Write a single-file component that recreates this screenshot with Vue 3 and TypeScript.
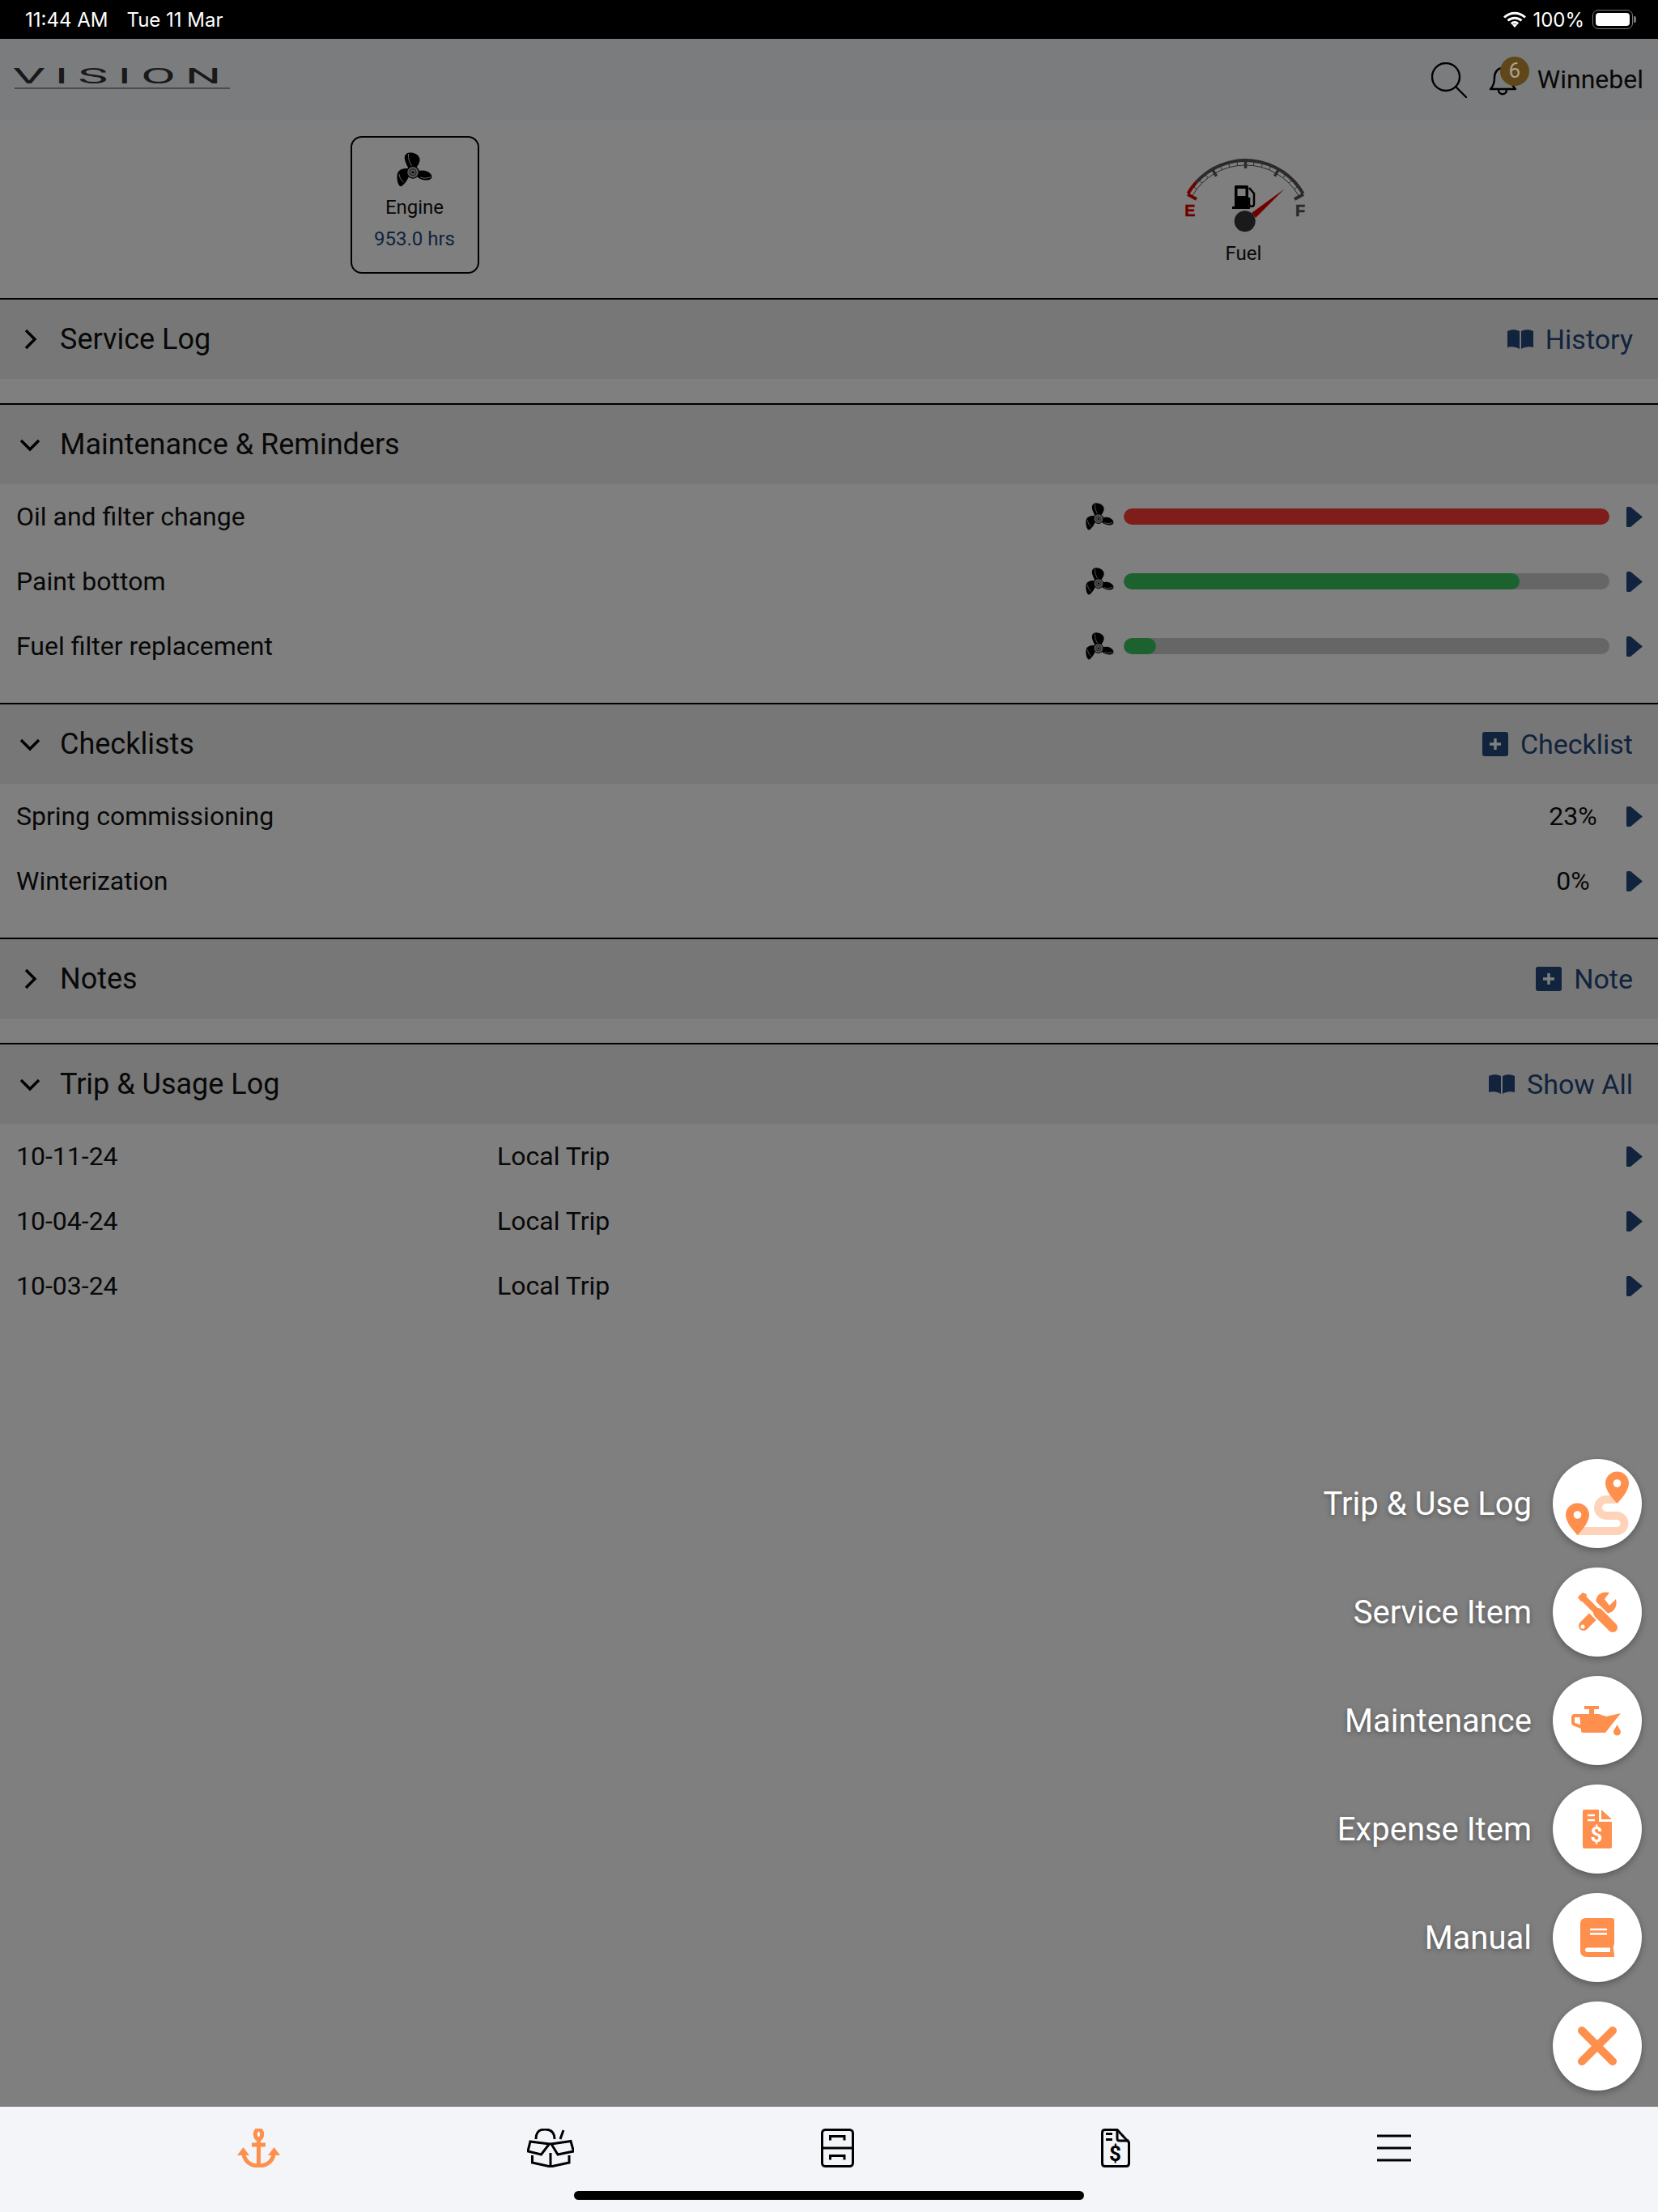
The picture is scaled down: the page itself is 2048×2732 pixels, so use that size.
<script setup lang="ts">
import { computed } from 'vue'

interface Reminder { name: string; pct: number; color: string }

const reminders: Reminder[] = [
  { name: 'Oil and filter change', pct: 100, color: '#fc3a32' },
  { name: 'Paint bottom', pct: 81.5, color: '#38c45c' },
  { name: 'Fuel filter replacement', pct: 6.7, color: '#38c45c' }
]
const checklists = [
  { name: 'Spring commissioning', pct: '23%' },
  { name: 'Winterization', pct: '0%' }
]
const trips = [
  { date: '10-11-24', kind: 'Local Trip' },
  { date: '10-04-24', kind: 'Local Trip' },
  { date: '10-03-24', kind: 'Local Trip' }
]
const actions = [
  { label: 'Trip & Use Log', icon: 'route' },
  { label: 'Service Item', icon: 'tools' },
  { label: 'Maintenance', icon: 'oil' },
  { label: 'Expense Item', icon: 'expense' },
  { label: 'Manual', icon: 'manual' }
]

// gauge geometry, measured from the reference
const cx = 118.5
const cy = 110
const polar = (deg: number, r: number) => {
  const a = (deg * Math.PI) / 180
  return { x: +(cx + r * Math.sin(a)).toFixed(2), y: +(cy - r * Math.cos(a)).toFixed(2) }
}
const arc = (from: number, to: number, r: number) => {
  const a = polar(from, r)
  const b = polar(to, r)
  return `M${a.x} ${a.y}A${r} ${r} 0 0 1 ${b.x} ${b.y}`
}
const fineTicks = computed(() => {
  const out: string[] = []
  for (let d = -60; d <= 60; d += 7.5) {
    const a = polar(d, 76)
    const b = polar(d, 81)
    out.push(`M${a.x} ${a.y}L${b.x} ${b.y}`)
  }
  return out.join('')
})
const majorTicks = computed(() =>
  [-30, 0, 30]
    .map((d) => {
      const a = polar(d, 72)
      const b = polar(d, 82)
      return `M${a.x} ${a.y}L${b.x} ${b.y}`
    })
    .join('')
)
</script>

<template>
  <div class="screen">
    <svg class="defs" width="0" height="0" aria-hidden="true">
      <symbol id="prop" viewBox="0 0 44 44">
        <path d="M15 21C12 15 9 9 10 5C11 1 15 0 18 .5C24 1 29 5 28.500 10C28 14 26 17 23 20Z" fill="#000" />
        <path d="M27 23C31 22 36 22 40 25C43 27 44 30 43 32C41 35 36 35 32 34C29 33 27 32 25 30Z" fill="#000" />
        <path d="M14 20C10 20 6 20 3 23C0 26 0 31 1 36C2 40 4 43 6 42C9 40 13 35 15 30Z" fill="#000" />
        <path d="M14.500 2C14 8 16 13 18.500 17M29 31C33 32.500 38 32.500 42 30.500M3 27C3.500 31 5.500 35 8.500 37" fill="none" stroke="#ccc" stroke-width="1" />
        <circle cx="20" cy="24.700" r="7.400" fill="#aaa" stroke="#000" stroke-width="1.200" />
        <circle cx="20" cy="24.700" r="4" fill="none" stroke="#333" stroke-width="1" />
        <circle cx="20" cy="24.700" r="1.500" fill="#000" />
      </symbol>
      <symbol id="arrow" viewBox="0 0 20 25">
        <path d="M0 1.500Q0 0 1.500 0H5L20 12.500 5 25H1.500Q0 25 0 23.500Z" fill="#22467a" />
      </symbol>
      <symbol id="open-book" viewBox="0 0 32 24">
        <path d="M0 2C5 -.5 10 -.5 15 2V24C10 21 5 20.500 0 22ZM32 2C27 -.5 22 -.5 17 2V24C22 21 27 20.500 32 22Z" fill="#22467a" />
      </symbol>
      <symbol id="plus-box" viewBox="0 0 32 30">
        <rect width="32" height="30" rx="3" fill="#22467a" />
        <path d="M16 8V22M9 15H23" stroke="#fff" stroke-width="3.400" />
      </symbol>
    </svg>

    <div class="status">
      <div class="status-left"><span>11:44 AM</span><span>Tue 11 Mar</span></div>
      <div class="status-right">
        <svg width="28" height="20" viewBox="0 0 28 20">
          <path d="M1 7.500C8.500 .5 19.500 .5 27 7.500M5.500 11.500C10.500 7 17.500 7 22.500 11.500M9.800 15.300C12.400 13 15.600 13 18.200 15.300" fill="none" stroke="#fff" stroke-width="3" />
          <path d="M14 20L10.800 16.500C12.800 15 15.200 15 17.200 16.500Z" fill="#fff" />
        </svg>
        <span>100%</span>
        <div class="battery"><div class="battery-fill"></div></div>
      </div>
    </div>

    <div class="main">
      <header class="topbar">
        <div class="logo">
          <span class="logo-text">VISION</span>
          <div class="logo-rule"></div>
        </div>
        <div class="topbar-right">
          <svg class="search" width="44" height="44" viewBox="0 0 44 44">
            <circle cx="18" cy="18" r="17" fill="none" stroke="#000" stroke-width="2.400" />
            <path d="M30 30L43 43" stroke="#000" stroke-width="2.400" stroke-linecap="round" />
          </svg>
          <div class="bell">
            <svg width="36" height="38" viewBox="0 0 36 38">
              <path d="M2 28C6 24 7 20 7 14 7 7 11 2 17 2 23 2 27 7 27 14 27 20 29 24 33 28Z" fill="none" stroke="#000" stroke-width="2.400" stroke-linejoin="round" />
              <path d="M12 29C12 36 22 36 22 29" fill="none" stroke="#000" stroke-width="2.400" />
            </svg>
            <span class="badge">6</span>
          </div>
          <span class="user">Winnebel</span>
        </div>
      </header>

      <div class="summary">
        <div class="summary-cell">
          <div class="engine">
            <svg width="44" height="44"><use href="#prop" /></svg>
            <span class="engine-label">Engine</span>
            <span class="engine-hours">953.0 hrs</span>
          </div>
        </div>
        <div class="summary-cell">
          <div class="fuel">
            <svg width="240" height="125" viewBox="0 0 240 125">
              <path :d="arc(-48, 60, 82)" fill="none" stroke="#555" stroke-width="4" />
              <path :d="fineTicks" fill="none" stroke="#555" stroke-width="1" />
              <path :d="arc(-60, 60, 76)" fill="none" stroke="#555" stroke-width="1" />
              <path :d="majorTicks" fill="none" stroke="#555" stroke-width="3.500" />
              <path :d="arc(-60, -48, 82)" fill="none" stroke="#e00000" stroke-width="4" />
              <path d="M47 70L58 76" stroke="#e00000" stroke-width="4" />
              <path d="M190 70L179 76" stroke="#555" stroke-width="4" />
              <text x="50" y="97" class="gauge-e">E</text>
              <text x="186" y="97" class="gauge-f">F</text>
              <path d="M105 60Q105 59 107 59H120Q122 59 122 61V85H124V88H102V85H105ZM108.500 63V72H118.500V63Z" fill="#000" />
              <path d="M123 62L129 69V82C129 86 123 86 123 82V74" fill="none" stroke="#000" stroke-width="2.500" />
              <path d="M166.700 63.300L126 93 131 99Z" fill="#e00000" />
              <circle cx="117.700" cy="103.300" r="13" fill="#343434" />
            </svg>
            <span class="fuel-label">Fuel</span>
          </div>
        </div>
      </div>

      <section class="section">
        <div class="section-head">
          <svg class="chev" width="50" height="50" viewBox="0 0 50 50"><path d="M20 14L31 25 20 36" /></svg>
          <span class="section-title">Service Log</span>
          <span class="section-action">
            <svg width="32" height="24"><use href="#open-book" /></svg>History
          </span>
        </div>
      </section>

      <section class="section">
        <div class="section-head">
          <svg class="chev" width="50" height="50" viewBox="0 0 50 50"><path d="M14 20L25 31 36 20" /></svg>
          <span class="section-title">Maintenance &amp; Reminders</span>
        </div>
        <div v-for="r in reminders" :key="r.name" class="row">
          <span class="row-name">{{ r.name }}</span>
          <svg class="row-prop" width="35" height="35"><use href="#prop" /></svg>
          <div class="track">
            <div class="track-fill" :style="{ width: r.pct + '%', background: r.color }"></div>
          </div>
          <svg class="row-arrow" width="20" height="25"><use href="#arrow" /></svg>
        </div>
      </section>

      <section class="section">
        <div class="section-head">
          <svg class="chev" width="50" height="50" viewBox="0 0 50 50"><path d="M14 20L25 31 36 20" /></svg>
          <span class="section-title">Checklists</span>
          <span class="section-action">
            <svg width="32" height="30"><use href="#plus-box" /></svg>Checklist
          </span>
        </div>
        <div v-for="c in checklists" :key="c.name" class="row">
          <span class="row-name">{{ c.name }}</span>
          <span class="row-pct">{{ c.pct }}</span>
          <svg class="row-arrow" width="20" height="25"><use href="#arrow" /></svg>
        </div>
      </section>

      <section class="section">
        <div class="section-head">
          <svg class="chev" width="50" height="50" viewBox="0 0 50 50"><path d="M20 14L31 25 20 36" /></svg>
          <span class="section-title">Notes</span>
          <span class="section-action">
            <svg width="32" height="30"><use href="#plus-box" /></svg>Note
          </span>
        </div>
      </section>

      <section class="section">
        <div class="section-head">
          <svg class="chev" width="50" height="50" viewBox="0 0 50 50"><path d="M14 20L25 31 36 20" /></svg>
          <span class="section-title">Trip &amp; Usage Log</span>
          <span class="section-action">
            <svg width="32" height="24"><use href="#open-book" /></svg>Show All
          </span>
        </div>
        <div v-for="t in trips" :key="t.date" class="row">
          <span class="row-date">{{ t.date }}</span>
          <span class="row-name">{{ t.kind }}</span>
          <svg class="row-arrow" width="20" height="25"><use href="#arrow" /></svg>
        </div>
      </section>

      <div class="fab-menu">
        <div v-for="a in actions" :key="a.label" class="fab-item">
          <span class="fab-label">{{ a.label }}</span>
          <div class="fab">
            <svg width="110" height="110" viewBox="0 0 110 110">
              <template v-if="a.icon === 'route'">
                <path d="M78 50H66A10 10 0 0 0 66 70H79A9.500 9.500 0 0 1 79 89H30" fill="none" stroke="#ffd3b9" stroke-width="10" />
                <path d="M79.500 55C74 49 65 39 65 30A14.500 14.500 0 0 1 94 30C94 39 85 49 79.500 55Z" fill="#fe8f4c" />
                <circle cx="79.500" cy="30" r="4.800" fill="#fff" />
                <path d="M30.500 94C25 88 16 78 16 69A14.500 14.500 0 0 1 45 69C45 78 36 88 30.500 94Z" fill="#fe8f4c" />
                <circle cx="30.500" cy="69" r="4.800" fill="#fff" />
              </template>
              <template v-else-if="a.icon === 'tools'">
                <path d="M38 72L62 48" stroke="#fe8f4c" stroke-width="12" stroke-linecap="round" />
                <circle cx="37" cy="73" r="2.600" fill="#fff" />
                <path d="M54 38C56 32 63 29 70 31L64 39 70 47 78 39C80 46 77 54 70 56 66 57 62 56 60 55L54 49C53 45 53 41 54 38Z" fill="#fe8f4c" />
                <path d="M34 34L74 74" stroke="#fff" stroke-width="16" />
                <path d="M34 34L56 56" stroke="#fe8f4c" stroke-width="8" />
                <path d="M31 37L37 31 42 33 41 40 35 42Z" fill="#fe8f4c" />
                <path d="M56 56L74 74" stroke="#fe8f4c" stroke-width="12" stroke-linecap="round" />
              </template>
              <template v-else-if="a.icon === 'oil'">
                <path d="M39 37H57V41H51V47H45V41H39Z" fill="#fe8f4c" />
                <path d="M33 47H57L66 50 84 46 65 70H37Q35 70 35 68Z" fill="#fe8f4c" />
                <path d="M36 49H27Q25 49 25 51V57Q25 59 27 60L36 63" fill="none" stroke="#fe8f4c" stroke-width="4" />
                <path d="M79.500 60C77 65 75 67 75 69A4.500 4.500 0 0 0 84 69C84 67 82 65 79.500 60Z" fill="#fe8f4c" />
              </template>
              <template v-else-if="a.icon === 'expense'">
                <path d="M39 31H57V46H73V77Q73 79 71 79H39Q37 79 37 77V33Q37 31 39 31Z" fill="#fe8f4c" />
                <path d="M60 31L73 43H60Z" fill="#fe8f4c" />
                <path d="M43 38H52M43 44H52" stroke="#fff" stroke-width="2.500" />
                <text x="54" y="71" class="fab-dollar">$</text>
              </template>
              <template v-else>
                <path d="M41 31H73Q76 31 76 34V63Q74 66 75 70 76 73 76 79H42Q34 79 34 71V38Q34 31 41 31Z" fill="#fe8f4c" />
                <path d="M46 45H67M46 50.500H67" stroke="#fff" stroke-width="2.500" />
                <path d="M43 67.500H71V73H43Q40 73 40 70.200 40 67.500 43 67.500Z" fill="#fff" />
              </template>
            </svg>
          </div>
        </div>
        <div class="fab-item">
          <div class="fab">
            <svg width="110" height="110" viewBox="0 0 110 110">
              <path d="M36 36L74 74M74 36L36 74" stroke="#fe8f4c" stroke-width="10" stroke-linecap="round" />
            </svg>
          </div>
        </div>
      </div>
    </div>

    <nav class="tabbar">
      <svg width="53" height="48" viewBox="0 0 53 48" class="orange">
        <ellipse cx="26.500" cy="7" rx="4.200" ry="6" />
        <path d="M26.500 13V47M18 20H35M7.500 27C7.500 39 15 46 26.500 46 38 46 45.500 39 45.500 27" />
        <path d="M0 33L7.500 23 15 33ZM38 33L45.500 23 53 33Z" class="solid" />
      </svg>
      <svg width="58" height="48" viewBox="0 0 58 48">
        <path d="M11 13C11 4 15 1 22 1 30 1 34 5 34 13M45 2L41 13" />
        <path d="M4 16L27.500 19 17.500 32 1 28ZM54 15.500L30 19 38 32 57.500 28Z" />
        <path d="M6.500 33V42L29 47 52 42V33M29 30V47" />
      </svg>
      <svg width="41" height="48" viewBox="0 0 41 48">
        <rect x="1.500" y="1.500" width="38" height="45" rx="4" />
        <path d="M1.500 24H39.500M11.500 14.500V9.500H29V14.500M11.500 38.500V33.500H29V38.500" />
      </svg>
      <svg width="36" height="48" viewBox="0 0 36 48">
        <path d="M5 1.500H20L34.500 17V43Q34.500 46.500 31 46.500H5Q1.500 46.500 1.500 43V5Q1.500 1.500 5 1.500Z" />
        <path d="M20 1.500V12Q20 15 23 15H34.500M6 6.500H14M6 13.500H14" />
        <text x="17.500" y="40" class="nav-dollar">$</text>
      </svg>
      <svg width="42" height="36" viewBox="0 0 42 36" class="burger">
        <path d="M0 3H42M0 18H42M0 33H42" />
      </svg>
    </nav>
    <div class="home-bar"></div>
  </div>
</template>

<style scoped>
.screen {
  position: relative;
  display: flex;
  flex-direction: column;
  width: 2048px;
  height: 2732px;
  overflow: hidden;
  font-family: Roboto, "Liberation Sans", sans-serif;
  color: #111;
}

.defs {
  position: absolute;
}

.status {
  display: flex;
  justify-content: space-between;
  align-items: center;
  height: 48px;
  padding: 0 31px;
  background: #000;
  color: #fff;
  font-family: Inter, Roboto, sans-serif;
  font-size: 24px;
}

.status-left {
  display: flex;
  gap: 23px;
}

.status-right {
  display: flex;
  align-items: center;
  gap: 8px;
}

.battery {
  position: relative;
  width: 50px;
  height: 24px;
  padding: 3px;
  margin-left: 2px;
  border: 1.500px solid #777;
  border-radius: 7px;
  box-sizing: border-box;
}

.battery::after {
  content: "";
  position: absolute;
  right: -5px;
  top: 7px;
  width: 3px;
  height: 8px;
  border-radius: 0 2px 2px 0;
  background: #777;
}

.battery-fill {
  height: 100%;
  border-radius: 4px;
  background: #fff;
}

.main {
  position: relative;
  flex: 1;
  background: #fff;
}

.main::after {
  content: "";
  position: absolute;
  inset: 0;
  z-index: 1;
  background: rgba(0, 0, 0, 0.5);
}

.topbar {
  display: flex;
  justify-content: space-between;
  height: 100px;
  background: #f7f9fc;
}

.logo {
  padding: 34px 0 0 16px;
}

.logo-text {
  display: block;
  width: 252px;
  height: 26px;
  font-size: 25px;
  font-weight: 400;
  line-height: 26px;
  letter-spacing: 4.700px;
  white-space: nowrap;
  color: #333;
  transform: scaleX(2.500);
  transform-origin: left center;
}

.logo-rule {
  width: 266px;
  height: 2px;
  margin: 0 0 0 2px;
  background: #999;
}

.topbar-right {
  display: flex;
  align-items: flex-start;
  padding-right: 18px;
}

.search {
  margin: 29px 0 0 0;
}

.bell {
  position: relative;
  width: 36px;
  height: 38px;
  margin: 34px 24px 0 27px;
}

.badge {
  position: absolute;
  left: 14px;
  top: -12px;
  z-index: 2;
  width: 36px;
  height: 36px;
  border-radius: 50%;
  background: #5f471a;
  color: #aca28e;
  font-size: 26px;
  line-height: 34px;
  text-align: center;
}

.user {
  margin-top: 29px;
  font-size: 32px;
  line-height: 42px;
}

.summary {
  display: flex;
  height: 220px;
}

.summary-cell {
  display: flex;
  flex: 1;
  justify-content: center;
}

.engine {
  display: flex;
  flex-direction: column;
  align-items: center;
  box-sizing: border-box;
  width: 159px;
  height: 170px;
  margin-top: 20px;
  padding-top: 18px;
  border: 2px solid #000;
  border-radius: 14px;
}

.engine-label {
  margin-top: 8px;
  font-size: 24px;
  line-height: 32px;
}

.engine-hours {
  margin-top: 7px;
  font-size: 24px;
  line-height: 32px;
  color: #22467a;
}

.fuel {
  display: flex;
  flex-direction: column;
  align-items: center;
  margin: 22px 0 0 8px;
}

.fuel-label {
  margin-top: 2px;
  margin-right: 8px;
  font-size: 24px;
  line-height: 32px;
}

.gauge-e,
.gauge-f {
  font-family: "Liberation Sans", sans-serif;
  font-size: 20px;
  font-weight: 700;
  stroke-width: 0.500;
  text-anchor: middle;
}

.gauge-e {
  fill: #e00000;
  stroke: #e00000;
}

.gauge-f {
  fill: #555;
  stroke: #555;
}

.section {
  border-top: 2px solid #000;
  padding-bottom: 30px;
}

.section-head {
  display: flex;
  align-items: center;
  height: 98px;
  padding: 0 31px 0 12px;
  background: #eee;
}

.chev {
  margin-right: 12px;
  fill: none;
  stroke: #000;
  stroke-width: 3.400;
}

.section-title {
  flex: 1;
  font-size: 36px;
}

.section-action {
  display: flex;
  align-items: center;
  gap: 15px;
  font-size: 34px;
  color: #22467a;
}

.row {
  display: flex;
  align-items: center;
  height: 80px;
  padding: 0 19px 0 20px;
  font-size: 32px;
}

.row-name {
  flex: 1;
}

.row-date {
  width: 594px;
}

.row-prop {
  margin-right: 12px;
}

.track {
  width: 600px;
  height: 20px;
  margin-right: 21px;
  border-radius: 10px;
  background: #ccc;
  overflow: hidden;
}

.track-fill {
  height: 100%;
  border-radius: 10px;
}

.row-pct {
  width: 60px;
  margin-right: 36px;
  text-align: center;
}

.fab-menu {
  position: absolute;
  right: 20px;
  bottom: 20px;
  z-index: 2;
  display: flex;
  flex-direction: column;
  gap: 24px;
}

.fab-item {
  display: flex;
  align-items: center;
  justify-content: flex-end;
  gap: 26px;
}

.fab-label {
  font-size: 40px;
  color: #fff;
  text-shadow: 0 2px 6px rgba(0, 0, 0, 0.35);
}

.fab {
  width: 110px;
  height: 110px;
  border-radius: 50%;
  background: #fff;
  box-shadow: 0 3px 8px rgba(0, 0, 0, 0.3);
}

.fab-dollar {
  font-size: 26px;
  font-weight: 700;
  fill: #fff;
  text-anchor: middle;
}

.tabbar {
  display: flex;
  align-items: flex-start;
  gap: 305px;
  height: 130px;
  padding: 27px 0 0 293px;
  box-sizing: border-box;
  background: #f3f5f9;
}

.tabbar svg {
  fill: none;
  stroke: #000;
  stroke-width: 3;
  flex: none;
}

.tabbar .orange {
  stroke: #fe8f4c;
  stroke-width: 5;
}

.tabbar .solid {
  fill: #fe8f4c;
  stroke: none;
}

.tabbar .burger {
  margin-top: 6px;
}

.nav-dollar {
  font-size: 26px;
  font-weight: 700;
  fill: #000;
  stroke: none;
  text-anchor: middle;
}

.home-bar {
  position: absolute;
  left: 709px;
  bottom: 15px;
  width: 630px;
  height: 11px;
  border-radius: 6px;
  background: #000;
}
</style>

<style>
html,
body {
  margin: 0;
  background: #fff;
}
</style>
